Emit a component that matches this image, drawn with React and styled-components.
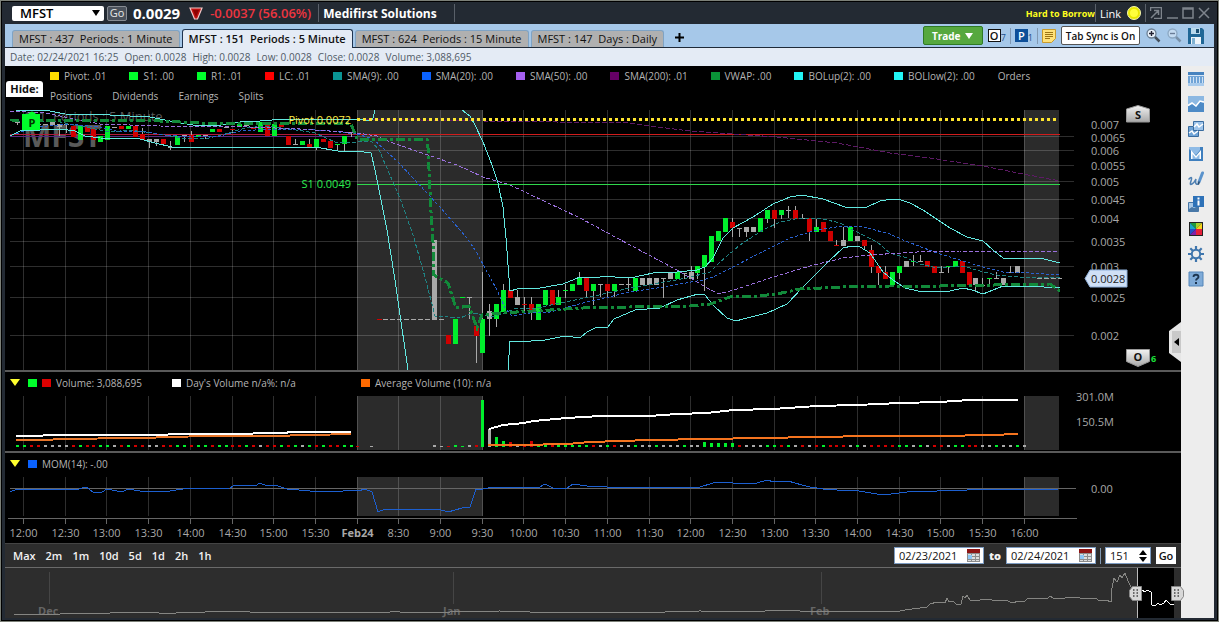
import React, { useState } from 'react'
import styled, { createGlobalStyle } from 'styled-components'

const COLORS = { g: '#00ee2c', r: '#d00000', w: '#a9a9a9' }
const STEP = 6.95

const legend = [
  ['Pivot: .01', '#ffde00'],
  ['S1: .00', '#00ff2b'],
  ['R1: .01', '#00ff2b'],
  ['LC: .01', '#ff0000'],
  ['SMA(9): .00', '#0a9494'],
  ['SMA(20): .00', '#0a62ff'],
  ['SMA(50): .00', '#a55ff0'],
  ['SMA(200): .01', '#660066'],
  ['VWAP: .00', '#0a9437'],
  ['BOLup(2): .00', '#22f5f5'],
  ['BOLlow(2): .00', '#22f5f5'],
  ['Orders', null],
]

const timeLabels = [
  '12:00', '12:30', '13:00', '13:30', '14:00', '14:30', '15:00', '15:30',
  'Feb24', '8:30', '9:00', '9:30', '10:00', '10:30', '11:00', '11:30',
  '12:00', '12:30', '13:00', '13:30', '14:00', '14:30', '15:00', '15:30',
  '16:00',
]
const gridX = timeLabels.map((_, i) => Math.round(23 + i * 41.7) + 0.5)

const priceLevels = [
  ['0.007', 124], ['0.0065', 137], ['0.006', 150], ['0.0055', 165],
  ['0.005', 181], ['0.0045', 199], ['0.004', 218], ['0.0035', 241],
  ['0.003', 266], ['0.0025', 297], ['0.002', 335],
]

// [color, body top, body bottom, wick top, wick bottom]
const dayOne = [
  ['w', 122, 123, 122, 125], ['w', 123, 124], ['w', 124, 125], ['w', 124, 125],
  ['w', 124, 125], ['w', 122, 125], ['w', 124, 127, 124, 136], ['w', 124, 125, 124, 133],
  ['r', 126, 137], ['g', 126, 140], ['r', 127, 132], ['r', 129, 140],
  ['g', 136, 142], ['g', 126, 140], ['w', 127, 128], ['r', 126, 129],
  ['g', 126, 129], ['r', 126, 137], ['r', 134, 140, 128, 140], ['w', 139, 142, 139, 148],
  ['w', 139, 142, 139, 146], ['r', 139, 144], ['w', 147, 148, 141, 150], ['g', 136, 145],
  ['w', 135, 136, 135, 142], ['r', 135, 142, 131, 142], ['g', 135, 137], ['w', 135, 136, 135, 139],
  ['g', 129, 132], ['r', 129, 132], ['w', 127, 128], ['r', 129, 130, 129, 133],
  ['g', 124, 127], ['w', 124, 126], ['r', 127, 129], ['g', 122, 132],
  ['r', 124, 136], ['g', 124, 136], ['r', 124, 127], ['r', 136, 145],
  ['w', 144, 145, 139, 145], ['g', 141, 145], ['r', 144, 147, 139, 147], ['g', 139, 147, 139, 150],
  ['r', 139, 142], ['r', 141, 148], ['g', 144, 145, 144, 150], ['g', 136, 144, 136, 152],
  ['w', 132, 133, 132, 137],
]

const preMarket = [
  ['r', 319, 320], ['w', 319, 320], ['w', 319, 320], ['w', 319, 320],
  ['w', 319, 320], ['w', 319, 320], ['w', 319, 320], ['w', 319, 320],
  ['w', 240, 320], ['w', 319, 320], ['r', 335, 344], ['g', 319, 344],
  ['g', 297, 298], ['w', 297, 298, 297, 319], ['r', 326, 336, 326, 363],
]

const dayTwo = [
  ['g', 319, 353, 272, 353], ['w', 311, 319, 304, 336], ['g', 304, 319, 304, 327],
  ['g', 290, 312, 284, 312], ['r', 290, 298], ['w', 297, 305, 290, 305],
  ['r', 304, 305, 297, 312], ['r', 304, 312, 297, 320], ['g', 304, 320],
  ['g', 290, 305], ['r', 290, 305], ['g', 297, 305, 290, 305],
  ['g', 290, 291, 284, 298], ['g', 284, 291], ['g', 278, 285, 272, 285],
  ['r', 278, 291, 278, 298], ['g', 284, 291, 284, 305], ['w', 284, 285, 284, 297],
  ['r', 284, 291, 284, 297], ['g', 284, 291, 284, 297], ['w', 284, 285],
  ['w', 284, 285, 278, 291], ['g', 278, 291], ['w', 278, 285],
  ['w', 278, 285], ['w', 278, 285], ['w', 278, 279, 278, 298],
  ['w', 272, 279], ['g', 272, 279], ['w', 273, 274, 273, 279],
  ['w', 272, 279, 266, 279], ['g', 266, 273, 266, 279], ['g', 255, 267, 255, 291],
  ['g', 236, 262], ['g', 231, 241], ['g', 218, 232],
  ['r', 222, 228, 218, 237], ['w', 228, 229, 228, 237], ['w', 227, 232, 227, 237],
  ['w', 227, 232], ['g', 218, 232], ['g', 210, 219, 210, 223],
  ['r', 210, 219, 210, 228], ['g', 210, 215, 210, 219], ['w', 210, 211, 206, 218],
  ['r', 210, 219, 206, 219], ['w', 218, 219, 214, 219], ['r', 218, 232, 218, 241],
  ['g', 227, 232, 219, 232], ['r', 222, 232], ['r', 231, 241],
  ['r', 245, 246, 240, 246], ['w', 240, 246, 227, 246], ['g', 227, 241],
  ['w', 236, 241], ['r', 240, 246, 240, 250], ['r', 250, 267, 245, 273],
  ['r', 266, 273, 266, 285], ['r', 272, 279, 266, 279], ['g', 272, 285],
  ['g', 266, 273, 266, 279], ['w', 261, 267], ['g', 261, 262, 255, 266],
  ['w', 261, 262, 255, 262], ['r', 261, 267], ['r', 266, 273],
  ['w', 272, 273, 266, 273], ['g', 266, 267, 266, 273], ['g', 261, 267],
  ['r', 261, 273], ['r', 272, 285], ['w', 278, 285, 278, 291],
  ['w', 285, 286, 278, 286], ['g', 278, 279, 278, 285], ['w', 278, 279, 272, 279],
  ['w', 278, 285], ['w', 272, 273, 266, 273], ['w', 266, 273],
]

const lines = {
  bolUpA: '16,110 45,110 65,114 110,115 150,117 175,122 193,125 215,126 240,122 260,121 285,119 300,120 330,119 357,119 371,121 373,118 375,110',
  bolUpB: '462,110 470,116 475,125 483,142 492,165 498,183 503,207 506,238 510,291 517,289 540,288 563,284 580,277 593,278 607,276 623,278 635,277 653,273 677,272 697,270 705,267 713,258 723,238 733,228 753,217 773,204 790,197 802,195 823,199 845,207 867,207 880,201 892,199 901,200 910,203 923,210 950,228 967,237 983,241 993,250 1003,258 1040,258 1060,263',
  bolLowA: '10,136 20,131 60,129 75,131 85,136 100,138 140,139 155,143 172,147 257,147 315,147 338,151 357,151 371,153 375,170 380,195 387,230 395,280 408,370',
  bolLowB: '508,370 510,341 518,342 545,340 565,336 580,338 587,332 595,328 608,327 614,319 635,310 660,308 677,300 698,294 705,295 713,305 727,318 736,321 743,319 767,313 787,304 803,287 830,260 843,248 852,246 860,247 870,253 883,272 893,280 905,288 918,291 950,291 963,288 972,290 983,294 1003,286 1027,286 1060,288',
  sma20: '16,134 35,127 70,124 100,127 120,132 140,131 165,135 190,137 220,136 240,131 270,129 300,129 330,131 357,134 373,139 399,163 440,207 453,222 467,238 477,253 485,268 497,290 505,308 512,316 530,313 550,312 583,303 630,292 657,288 703,280 713,277 733,267 760,253 790,238 817,230 843,226 863,227 890,234 903,240 937,253 960,260 983,267 1003,272 1030,273 1060,275',
  sma9: '16,121 60,122 90,128 110,132 130,130 165,135 180,138 205,139 225,134 245,128 265,126 290,129 315,133 335,142 357,142 371,141 379,150 400,198 413,235 425,277 435,316 460,318 473,313 493,317 517,308 537,308 560,303 590,297 630,288 687,278 710,272 720,262 740,245 763,230 780,222 800,218 823,219 840,223 857,232 877,242 890,253 907,258 920,264 937,268 963,266 983,272 997,275 1030,278 1060,277',
  sma50: '10,111 45,113 60,116 100,124 160,126 250,127 300,129 357,133 377,136 390,142 428,155 457,165 483,177 510,185 580,218 630,245 677,270 707,288 719,294 737,289 770,278 810,266 843,258 870,255 917,252 960,251 1057,251',
  sma200: '357,119 483,121 630,123 650,126 690,131 733,134 777,137 837,143 890,153 930,158 983,166 1023,174 1060,181',
  vwap: '10,120 160,121 200,123 300,123 351,124 357,139 427,139 428,148 431,212 433,242 434,275 448,283 456,308 469,306 477,328 482,315 500,313 583,308 630,307 690,306 710,304 730,297 757,296 777,294 800,289 843,287 890,286 940,286 1050,284 1060,291',
  dayVolA: '16,436 40,436 46,435 165,435 171,434 250,434 256,433 285,433 290,432 351,432',
  dayVolB: '489,429 496,427 503,425 524,423 533,421 567,418 600,416 649,416 677,414 707,413 733,410 773,409 817,406 857,405 900,403 940,402 970,400 1018,400',
  avgVolA: '16,440 50,440 56,439 140,438 205,436 270,436 351,434',
  avgVolB: '488,445 520,445 567,444 590,442 650,440 707,439 760,438 817,437 870,436 940,436 990,435 1018,434',
  mom: '10,492 17,489 40,489 68,489 75,490 86,487 93,492 102,492 107,489 122,492 128,489 140,491 163,492 183,489 230,488 235,485 255,486 260,483 267,486 275,485 287,489 310,491 337,492 350,490 358,491 365,489 372,492 378,512 385,509 438,509 448,512 462,508 470,507 476,489 483,489 493,487 523,487 540,487 545,484 553,488 567,488 573,484 587,486 607,487 700,487 713,483 727,482 733,483 757,483 767,480 774,482 788,481 802,485 810,487 823,489 837,490 853,490 883,495 907,492 967,490 1059,489',
  overview: '14,614 60,614 66,613 72,614 85,613 110,613 125,612 150,612 168,614 185,612 205,612 215,611 240,611 250,612 280,612 390,612 395,611 400,612 450,612 500,611 508,612 515,611 530,612 560,612 600,612 665,612 700,611 740,612 745,611 765,611 782,610 800,611 850,611 900,611 905,610 927,607 930,604 937,602 945,603 947,598 949,602 953,601 956,604 961,604 963,596 965,598 967,595 970,600 980,600 983,599 1000,601 1005,600 1013,603 1018,601 1024,602 1028,598 1035,599 1048,598 1050,596 1053,598 1065,598 1075,597 1085,599 1095,598 1100,601 1106,600 1111,602 1112,588 1114,578 1117,582 1120,575 1122,578 1125,573 1128,581 1131,587 1137,589',
  selected: '1142,590 1145,592 1147,590 1151,592 1152,605 1155,606 1158,603 1160,605 1164,603 1166,600 1170,604 1174,605',
}

const volumeA = 'ggrrwwwwrgrrggwrgrrwwrrggrggrggrrgrwrrgrgwgrgrrgg'
const volumeB = 'wwrggwr'
const volumeC =
  'gwggrwrrggrgggggrwgrwwgwwgwwwgwwgggggrwwwggrgwrwrgrrrwgwrrrrggwgwrrwggrrwwgwwgw'
const volumeHeights = { 0: 47, 1: 18, 2: 10, 3: 6, 4: 5, 7: 6, 32: 5, 33: 4, 34: 4, 35: 4, 36: 4 }

const GlobalStyle = createGlobalStyle`
  * {
    box-sizing: border-box;
  }
  body {
    margin: 0;
    background: #232a33;
    font-family: 'Open Sans', 'Noto Sans', sans-serif;
    font-size: 11px;
  }
  button, input, select {
    font: inherit;
    color: inherit;
    margin: 0;
    padding: 0;
    border: 0;
    background: none;
  }
  button {
    white-space: pre;
    cursor: pointer;
  }
`

const Candles = ({ data, start }) =>
  data.map(([c, top, bottom, high, low], i) => {
    const x = Math.round(start + i * STEP - 0.5)
    return (
      <g key={i} fill={COLORS[c]}>
        {high !== undefined && (
          <rect x={x} y={high} width="1" height={low - high} fill="#a9a9a9" />
        )}
        <rect x={x - 2} y={top} width="5" height={bottom - top} />
      </g>
    )
  })

const VolumeBars = ({ data, start, heights = {} }) =>
  data.split('').map((c, i) => {
    const h = heights[i] || 2
    return (
      <rect
        key={i}
        x={Math.round(start + i * STEP - 1.5)}
        y={447 - h}
        width="3"
        height={h}
        fill={COLORS[c]}
      />
    )
  })

const Grid = ({ top, bottom, shadeBottom = bottom }) => (
  <g>
    <rect x="357" y={top} width="126" height={shadeBottom - top} fill="#2b2b2b" />
    <rect x="1024" y={top} width="35" height={shadeBottom - top} fill="#2b2b2b" />
    {gridX.map((x) => (
      <path key={x} d={`M${x} ${top}V${bottom}`} stroke="#fff" strokeOpacity=".18" />
    ))}
  </g>
)

const PriceChart = () => (
  <Plot viewBox="5 105 1176 265" role="img" aria-label="Price chart">
    <g shapeRendering="crispEdges" fill="none">
      <Grid top={110} bottom={370} />
      {priceLevels.slice(1).map(([p, y]) => (
        <path
          key={p}
          d={`M10 ${p === '0.0065' ? 136.5 : y + 0.5}H1074`}
          stroke="#fff"
          strokeOpacity=".18"
        />
      ))}
    </g>
    <Mark x="23" y="147" size={30}>MFST</Mark>
    <Mark x="24" y="121" size={13}>151  Periods : 5 Minute</Mark>
    <g shapeRendering="crispEdges" fill="none">
      <path d="M10 134.5H357" stroke="#b01a3a" />
      <path d="M10 136.5H357" stroke="#582a80" />
      <path d="M357 134.5H1060" stroke="#d01c1c" />
      <path d="M357 184.5H1060" stroke="#2fd84c" />
      <Candles data={dayOne} start={17.5} />
      <Candles data={preMarket} start={379} />
      <Candles data={dayTwo} start={482.5} />
      <path d="M1037 278.5H1062" stroke="#a9a9a9" strokeDasharray="5 2" />
      <polyline points={lines.sma200} stroke="#5e1a66" strokeDasharray="5 2" />
      <polyline points={lines.sma9} stroke="#1f8383" strokeDasharray="4 2" />
      <polyline points={lines.sma20} stroke="#2a62d0" strokeDasharray="3 2" />
      <polyline points={lines.sma50} stroke="#9a70dd" strokeDasharray="4 2" />
      <polyline points={lines.bolUpA} stroke="#62e8e0" />
      <polyline points={lines.bolUpB} stroke="#62e8e0" />
      <polyline points={lines.bolLowA} stroke="#62e8e0" />
      <polyline points={lines.bolLowB} stroke="#62e8e0" />
      <polyline
        points={lines.vwap}
        stroke="#128a3a"
        strokeWidth="3"
        strokeDasharray="9 3 3 3"
      />
      <path d="M357 119.5H1058" stroke="#ffe62e" strokeWidth="3" strokeDasharray="3 3" />
    </g>
    <path d="M22 114h6q4-5 8 0h4v16h-18z" fill="#00ff2b" />
    <Tick x="32" y="127" anchor="middle" fill="#003300" bold>P</Tick>
    <Tick x="351" y="124" anchor="end" fill="#ffe940">Pivot 0.0072</Tick>
    <Tick x="351" y="188" anchor="end" fill="#2bf050">S1 0.0049</Tick>
    {priceLevels.map(([p, y]) => (
      <Tick key={p} x="1091" y={y + 5}>{p}</Tick>
    ))}
    <path
      d="M1085 278.5l5-8.5h37v17h-37z"
      fill="#cfe0f6"
      stroke="#8fb0da"
    />
    <Tick x="1091" y="283" fill="#222">0.0028</Tick>
    <path d="M1126.500 109l11.500-3.500 11.500 3.500v13h-23z" fill="url(#metal)" stroke="#999" />
    <path d="M1126.500 349.500h23v12l-11.500 5-11.500-5z" fill="url(#metal)" stroke="#999" />
    <Tick x="1138" y="119" anchor="middle" fill="#111" bold>S</Tick>
    <Tick x="1138" y="361" anchor="middle" fill="#111" bold>O</Tick>
    <Tick x="1151" y="362" fill="#1be23a" bold small>6</Tick>
    <defs>
      <linearGradient id="metal" x1="0" y1="0" x2="0" y2="1">
        <stop offset="0" stopColor="#f2f2f2" />
        <stop offset="1" stopColor="#a8a8a8" />
      </linearGradient>
    </defs>
  </Plot>
)

const VolumeChart = () => (
  <Plot viewBox="5 396 1176 55" role="img" aria-label="Volume chart">
    <g shapeRendering="crispEdges" fill="none">
      <Grid top={396} bottom={450} />
      <VolumeBars data={volumeA} start={17.5} />
      <VolumeBars data="r" start={357.5} heights={{ 0: 1 }} />
      <VolumeBars data="w" start={371.5} heights={{ 0: 1 }} />
      <VolumeBars data={volumeB} start={434.5} heights={{ 1: 1, 2: 1, 4: 1 }} />
      <VolumeBars data={volumeC} start={482.5} heights={volumeHeights} />
      <g strokeWidth="2">
        <polyline points={lines.avgVolA} stroke="#e8762a" />
        <polyline points={lines.avgVolB} stroke="#f5741f" />
        <polyline points={lines.dayVolA} stroke="#fff" />
        <polyline points={lines.dayVolB} stroke="#fff" />
      </g>
    </g>
    <Tick x="1076" y="401">301.0M</Tick>
    <Tick x="1076" y="426">150.5M</Tick>
  </Plot>
)

const MomentumChart = () => (
  <Plot viewBox="5 477 1176 66" role="img" aria-label="Momentum chart">
    <g shapeRendering="crispEdges" fill="none">
      <Grid top={477} bottom={516} />
      <path d="M10 488.500H1076M8 518.500H1077" stroke="#666" />
      {gridX.map((x) => (
        <path key={x} d={`M${x} 519V524`} stroke="#666" />
      ))}
      <polyline points={lines.mom} stroke="#1c5fd0" />
    </g>
    <Tick x="1091" y="493">0.00</Tick>
    {timeLabels.map((t, i) => (
      <Tick key={i} x={gridX[i]} y="537" anchor="middle" bold={t === 'Feb24'}>
        {t}
      </Tick>
    ))}
  </Plot>
)

const Grip = ({ x, flip }) => (
  <g transform={`translate(${x} 586)`}>
    <path
      d={flip ? 'M.500 .500h9l3 4v6l-3 4h-9z' : 'M12.500 .500h-9l-3 4v6l3 4h9z'}
      fill="#d8d8d8"
      stroke="#888"
    />
    {[4, 7, 10].map((y) => (
      <path key={y} d={`M${flip ? 3 : 4} ${y}h1.500m2 0h1.500`} stroke="#444" strokeWidth="1.500" />
    ))}
  </g>
)

const Overview = () => (
  <Plot viewBox="5 567 1176 51" role="img" aria-label="Range selector">
    <g shapeRendering="crispEdges" fill="none">
      <rect x="5" y="567" width="1176" height="51" fill="#2d2d2d" />
      <path d="M5 567.500H1181" stroke="#6a6a6a" />
      <path d="M49.500 572V604M453.500 572V604M821.500 572V604" stroke="#454545" />
      <rect x="1137" y="568" width="37" height="50" fill="#000" />
      <path d="M1137.500 568V618" stroke="#bbb" />
    </g>
    <Tick x="38" y="615" fill="#666" bold>Dec</Tick>
    <Tick x="443" y="615" fill="#666" bold>Jan</Tick>
    <Tick x="810" y="615" fill="#666" bold>Feb</Tick>
    <g shapeRendering="crispEdges" fill="none">
      <polyline points={lines.overview} stroke="#858582" />
      <polyline points={lines.selected} stroke="#fff" />
    </g>
    <Grip x={1129} />
    <Grip x={1171} flip />
  </Plot>
)

const CalendarIcon = () => (
  <svg width="13" height="13" viewBox="0 0 13 13" aria-hidden="true">
    <path d="M0 0h13v13H0z" fill="#8c8c8c" />
    <path d="M0 0h13v4H0z" fill="#8e1414" />
    <path
      d="M1 5h3v2H1zM5 5h3v2H5zM9 5h3v2H9zM5 8h3v2H5zM9 8h3v2H9zM1 11h3v1H1zM5 11h3v1H5zM9 11h3v1H9z"
      fill="#ddd"
    />
    <path d="M1 6h4v4H1z" fill="#8cc6f5" />
  </svg>
)

const Magnifier = ({ sign, faded }) => (
  <svg width="15" height="15" viewBox="0 0 15 15" fill="none" opacity={faded ? 0.45 : 1} aria-hidden="true">
    <path d="M8.500 8.500l5 5" stroke="#44505c" strokeWidth="2.500" />
    <circle cx="5.500" cy="5.500" r="4.500" fill="#eaf3fc" stroke="#6c8196" strokeWidth="1.300" />
    <path d={sign === '+' ? 'M3 5.500h5M5.500 3v5' : 'M3 5.500h5'} stroke="#223" strokeWidth="1.400" />
  </svg>
)

const sideIcons = [
  ['Table', <g key="i"><path d="M0 1h16v14H0z" fill="#6fa3d6" /><path d="M0 1h16v3H0z" fill="#4783bf" /><path d="M0 4h16v1H0z" fill="#d8e8f7" /><path d="M0 12h16v3H0z" fill="#a9cbec" /><path d="M2.500 6v6M5.500 6v6M8.500 6v6M11.500 6v6M14.500 6v6" stroke="#cfe2f5" /></g>],
  ['Chart', <g key="i"><path d="M0 0h16v16H0z" fill="#4d8ac6" /><path d="M0 0h16v7l-4-1-4 5-4-3-4 2z" fill="#8cb8e2" /><path d="M0 9.500l4-2.500 4 3 4-5 4 1" stroke="#fff" strokeWidth="1.500" fill="none" /></g>],
  ['Compare charts', <g key="i"><path d="M.500 5.500h10v10h-10z" fill="#6fa3d6" stroke="#3a6c9f" /><path d="M5.500 .500h10v9h-10z" fill="#9cc3ea" stroke="#3a6c9f" /><path d="M1 12l3-2 2 3 4-3M6 6l3-3 2 3 4-3" stroke="#fff" strokeWidth="1.500" fill="none" /></g>],
  ['Overlay', <g key="i"><path d="M1 1h14v14H1z" fill="#3f7fbe" /><path d="M1 1h11v3L8 9 1 3z" fill="#8fbbe6" /><path d="M3 13V4l5 6 5-6v9z" fill="#fff" /><path d="M4.500 13V8L8 12l3.500-4v5z" fill="#8fbbe6" /></g>],
  ['Draw', <g key="i" fill="none" strokeLinecap="round"><path d="M1 8c3-3 3-1 2 2s-1 4 1 3 3-3 4-5c-1 4 0 6 2 5" stroke="#4d7fb2" strokeWidth="1.500" /><path d="M11 11l3.500-9" stroke="#5b93cc" strokeWidth="3" /><path d="M10.500 13l.500-2" stroke="#2c4e70" strokeWidth="1.500" /></g>],
  ['Chart info', <g key="i"><path d="M.500 6.500h10v9h-10z" fill="#a9c8e6" stroke="#4878a8" /><path d="M1 13l3-2 2 1 4-2v5H1z" fill="#4878a8" /><path d="M5 0h11v11H5z" fill="#2e72b8" /><path d="M9.500 4.500h2v5h-2zM9.500 1.500h2v2h-2z" fill="#fff" /></g>],
  ['Colors', <g key="i"><path d="M1 1h14v14H1z" fill="#222" /><path d="M2 2h6v6z" fill="#1e9a3c" /><path d="M2 2v6h6z" fill="#1aa7c8" /><path d="M8 2h6L8 8z" fill="#a6d02c" /><path d="M14 2v6H8z" fill="#f7d31b" /><path d="M2 8h6l-6 6z" fill="#2452c8" /><path d="M8 8v6H2z" fill="#8220a8" /><path d="M8 8h6v6H8z" fill="#e6203a" /></g>],
  ['Settings', <g key="i" fill="none" stroke="#3f76ad"><circle cx="8" cy="8" r="4.200" strokeWidth="2" /><path d="M8 0v3.500M8 12.500V16M0 8h3.500M12.500 8H16M2.300 2.300l2.500 2.500M11.200 11.200l2.500 2.500M2.300 13.700l2.500-2.500M11.200 4.800l2.500-2.500" strokeWidth="2.200" /></g>],
  ['Help', <g key="i"><path d="M1 1h14v14H1z" fill="#7fabd8" stroke="#5585b8" /><path d="M5.500 6c0-3 5-3 5 0 0 1.500-2.500 1.500-2.500 3.500" stroke="#1d3550" strokeWidth="1.800" fill="none" /><path d="M7 11h2v2H7z" fill="#1d3550" /></g>],
]

const App = () => {
  const [symbol, setSymbol] = useState('MFST')
  const [from, setFrom] = useState('02/23/2021')
  const [to, setTo] = useState('02/24/2021')
  const [count, setCount] = useState(151)

  return (
    <Window>
      <GlobalStyle />
      <TitleBar>
        <SymbolBox>
          <select aria-label="Symbol" value={symbol} onChange={(e) => setSymbol(e.target.value)}>
            <option>MFST</option>
          </select>
          <svg width="8" height="6" viewBox="0 0 8 6" aria-hidden="true">
            <path d="M0 0h8L4 6z" />
          </svg>
        </SymbolBox>
        <GoButton>Go</GoButton>
        <Price>0.0029</Price>
        <svg width="14" height="13" viewBox="0 0 14 13" role="img" aria-label="Down">
          <path d="M1 1h12L8.500 12h-3z" fill="#c01010" stroke="#f0c8c8" strokeWidth="1.200" />
          <path d="M4 3h6L7 10z" fill="#8c0000" />
        </svg>
        <Change>-0.0037 (56.06%)</Change>
        <Rule />
        <Company>Medifirst Solutions</Company>
        <Rule $push />
        <Borrow>Hard to Borrow</Borrow>
        <Rule />
        <LinkLabel>Link</LinkLabel>
        <svg width="14" height="14" viewBox="0 0 14 14" aria-hidden="true">
          <circle cx="7" cy="7" r="6.500" fill="#e8e800" stroke="#f7f7b0" />
          <circle cx="7" cy="7" r="4" fill="#ffff3c" />
        </svg>
        <Rule />
        <WindowButtons>
          <button aria-label="Pop out">
            <svg viewBox="0 0 12 12"><path d="M.500 4V.500h11v11H4M1 11l7-7M4 3.500h4.500V8" /></svg>
          </button>
          <button aria-label="Minimize">
            <svg viewBox="0 0 12 12"><path d="M1 11h11" /></svg>
          </button>
          <button aria-label="Maximize">
            <svg viewBox="0 0 12 12"><path d="M1 1h10v10H1zM1 2h10" /></svg>
          </button>
          <button aria-label="Close">
            <svg viewBox="0 0 12 12"><path d="M1 1l10 10M11 1L1 11" /></svg>
          </button>
        </WindowButtons>
      </TitleBar>

      <TabBar>
        <Tab>{'MFST : 437  Periods : 1 Minute'}</Tab>
        <Tab $active>{'MFST : 151  Periods : 5 Minute'}</Tab>
        <Tab>{'MFST : 624  Periods : 15 Minute'}</Tab>
        <Tab>{'MFST : 147  Days : Daily'}</Tab>
        <AddTab aria-label="Add tab">
          <svg width="9" height="9" viewBox="0 0 9 9"><path d="M4.500 0v9M0 4.500h9" stroke="#000" strokeWidth="2" /></svg>
        </AddTab>
        <Tools>
          <TradeButton>
            Trade
            <svg width="8" height="6" viewBox="0 0 8 6" aria-hidden="true"><path d="M0 0h8L4 6z" fill="#fff" /></svg>
          </TradeButton>
          <CountButton><b>O</b><sub>7</sub></CountButton>
          <ToolRule />
          <CountButton $solid><b>P</b><sub>1</sub></CountButton>
          <ToolRule />
          <button aria-label="Notes">
            <svg width="14" height="14" viewBox="0 0 14 14">
              <path d="M.500 .500h13v9l-4 4h-9z" fill="#ffe27a" stroke="#c89b2c" />
              <path d="M3 3.500h8M3 5.500h8M3 7.500h8M3 9.500h5" stroke="#9c7415" />
            </svg>
          </button>
          <SyncButton>Tab Sync is On</SyncButton>
          <ToolGroup>
            <button aria-label="Zoom in"><Magnifier sign="+" /></button>
            <button aria-label="Zoom out"><Magnifier sign="-" faded /></button>
            <button aria-label="Save">
              <svg width="16" height="16" viewBox="0 0 16 16">
                <path d="M0 0h14l2 2v14H0z" fill="#1f6796" />
                <path d="M3 0h9v6H3z" fill="#b9d9ec" />
                <path d="M8 1h3v4H8z" fill="#1b4f72" />
                <path d="M3 9h10v7H3z" fill="#eef5fa" />
                <path d="M4 10h3v6H4z" fill="#7fb2d2" />
              </svg>
            </button>
          </ToolGroup>
        </Tools>
      </TabBar>

      <InfoBar>
        <span>Date: 02/24/2021 16:25</span>
        <span>Open: 0.0028</span>
        <span>High: 0.0028</span>
        <span>Low: 0.0028</span>
        <span>Close: 0.0028</span>
        <span>Volume: 3,088,695</span>
      </InfoBar>

      <Body>
        <Charts>
          <Legend>
            <HideButton>Hide:</HideButton>
            <div>
              <LegendRow $gap={23}>
                {legend.map(([label, color]) => (
                  <LegendItem key={label}>
                    {color && <Swatch $color={color} />}
                    {label}
                  </LegendItem>
                ))}
              </LegendRow>
              <LegendRow $gap={20}>
                <LegendItem>Positions</LegendItem>
                <LegendItem>Dividends</LegendItem>
                <LegendItem>Earnings</LegendItem>
                <LegendItem>Splits</LegendItem>
              </LegendRow>
            </div>
          </Legend>
          <PriceChart />
          <Collapse aria-label="Collapse panel">
            <svg width="12" height="40" viewBox="0 0 12 40">
              <path d="M12 0L0 9v22l12 9z" fill="#e6e6e6" />
              <path d="M3 9h9v22H3z" fill="#c9c9c9" />
              <path d="M10 16v8l-5-4z" fill="#000" />
            </svg>
          </Collapse>

          <SubLegend>
            <Fold aria-label="Fold volume"><svg width="10" height="7" viewBox="0 0 10 7"><path d="M0 0h10L5 7z" fill="#ffff2e" /></svg></Fold>
            <Swatch $color="#00ff2b" />
            <SubItem $width={130}><Swatch $color="#dd0000" />Volume: 3,088,695</SubItem>
            <SubItem $width={189}><Swatch $color="#fff" />Day's Volume n/a%: n/a</SubItem>
            <SubItem><Swatch $color="#ff6a00" />Average Volume (10): n/a</SubItem>
          </SubLegend>
          <VolumeChart />

          <SubLegend>
            <Fold aria-label="Fold momentum"><svg width="10" height="7" viewBox="0 0 10 7"><path d="M0 0h10L5 7z" fill="#ffff2e" /></svg></Fold>
            <SubItem><Swatch $color="#0a62ff" />MOM(14): -.00</SubItem>
          </SubLegend>
          <MomentumChart />

          <RangeBar>
            {['Max', '2m', '1m', '10d', '5d', '1d', '2h', '1h'].map((r) => (
              <button key={r}>{r}</button>
            ))}
            <RangeForm>
              <Field $width={90}>
                <input aria-label="From date" value={from} onChange={(e) => setFrom(e.target.value)} />
                <button aria-label="Pick from date"><CalendarIcon /></button>
              </Field>
              <b>to</b>
              <Field $width={90}>
                <input aria-label="To date" value={to} onChange={(e) => setTo(e.target.value)} />
                <button aria-label="Pick to date"><CalendarIcon /></button>
              </Field>
              <ToolRule />
              <Field $width={46}>
                <input aria-label="Periods" value={count} onChange={(e) => setCount(e.target.value)} />
                <Spinner>
                  <button aria-label="More" onClick={() => setCount(+count + 1)}><svg width="8" height="5" viewBox="0 0 8 5"><path d="M0 5h8L4 0z" /></svg></button>
                  <button aria-label="Fewer" onClick={() => setCount(+count - 1)}><svg width="8" height="5" viewBox="0 0 8 5"><path d="M0 0h8L4 5z" /></svg></button>
                </Spinner>
              </Field>
              <RangeGo>Go</RangeGo>
            </RangeForm>
          </RangeBar>
          <Overview />
        </Charts>

        <Sidebar>
          {sideIcons.map(([label, icon]) => (
            <button key={label} aria-label={label}>
              <svg width="16" height="16" viewBox="0 0 16 16">{icon}</svg>
            </button>
          ))}
        </Sidebar>
      </Body>
    </Window>
  )
}

const Window = styled.div`
  min-height: 100vh;
  padding: 1px 4px 3px;
  border: 1px solid #7c8078;
  background: #232a33;
  box-shadow: inset 0 0 0 1px #000;
`

const TitleBar = styled.header`
  display: flex;
  align-items: center;
  height: 22px;
  padding: 0 4px 0 7px;
  color: #fff;
`

const SymbolBox = styled.div`
  display: flex;
  align-items: center;
  width: 92px;
  height: 15px;
  margin-right: 3px;
  padding-right: 4px;
  background: #fff;
  border-radius: 2px;
  color: #000;

  select {
    flex: 1;
    appearance: none;
    height: 15px;
    padding-left: 8px;
    font-size: 13px;
    font-weight: 600;
    line-height: 15px;
    outline: none;
  }
`

const GoButton = styled.button`
  width: 20px;
  height: 15px;
  margin-right: 6px;
  border: 1px solid #878c93;
  border-radius: 2px;
  background: #4a515b;
  color: #e8e8e8;
  line-height: 12px;
`

const Price = styled.strong`
  margin-right: 9px;
  font-size: 15px;
`

const Change = styled.span`
  margin: 0 7px;
  color: #ee3540;
  font-size: 13px;
  font-weight: 600;
`

const Rule = styled.i`
  width: 1px;
  height: 18px;
  margin-right: ${(p) => (p.$push ? 'auto' : '4px')};
  background: #596069;
`

const Company = styled.strong`
  margin-right: 17px;
  font-size: 12px;
`

const Borrow = styled.span`
  color: #ffff1e;
  font-size: 9px;
  font-weight: 700;
`

const LinkLabel = styled.span`
  margin-right: 6px;

  & + svg {
    margin-right: 4px;
  }
`

const WindowButtons = styled.div`
  display: flex;
  gap: 4px;

  button {
    height: 12px;
  }

  svg {
    display: block;
    width: 12px;
    height: 12px;
    fill: none;
    stroke: #7e848c;
    stroke-width: 1.5;
  }
`

const TabBar = styled.nav`
  display: flex;
  align-items: flex-end;
  gap: 2px;
  height: 24px;
  padding: 0 10px 0 7px;
  border-bottom: 1px solid #1f2a38;
  background: #a6c8e9;
`

const Tab = styled.button`
  height: ${(p) => (p.$active ? '19px' : '17px')};
  margin-bottom: ${(p) => (p.$active ? '-1px' : '0')};
  padding: 0 6px;
  border: 1px solid ${(p) => (p.$active ? '#1f3450' : '#7fa3c4')};
  border-bottom: 0;
  border-radius: 3px 3px 0 0;
  background: ${(p) => (p.$active ? '#e4ebf5' : '#b0b0b0')};
  color: #111;
  font-weight: ${(p) => (p.$active ? 600 : 400)};
  line-height: 16px;
`

const AddTab = styled.button`
  align-self: center;
  margin-left: 9px;
  padding-top: 4px;
`

const Tools = styled.div`
  display: flex;
  align-items: center;
  align-self: stretch;
  gap: 5px;
  margin-left: auto;

  svg {
    display: block;
  }
`

const ToolGroup = styled.div`
  display: flex;
  align-items: center;
  gap: 6px;
  margin-left: 1px;
`

const TradeButton = styled.button`
  display: flex;
  align-items: center;
  justify-content: center;
  gap: 5px;
  width: 60px;
  height: 19px;
  border: 1px solid #2f7a24;
  border-radius: 2px;
  background: #56a83e;
  color: #fff;
  font-size: 10px;
  font-weight: 700;
`

const CountButton = styled.button`
  display: flex;
  align-items: flex-end;

  b {
    width: 13px;
    height: 13px;
    border: 1px solid ${(p) => (p.$solid ? '#0d4f99' : '#111')};
    background: ${(p) => (p.$solid ? '#0d4f99' : '#fff')};
    color: ${(p) => (p.$solid ? '#fff' : '#111')};
    font-weight: 600;
    line-height: 11px;
  }

  sub {
    color: #1c4f8c;
    font-size: 9px;
    line-height: 8px;
    vertical-align: baseline;
  }
`

const ToolRule = styled.i`
  width: 1px;
  height: 16px;
  margin: 0 -1px;
  background: #8199b3;
`

const SyncButton = styled.button`
  width: 79px;
  height: 19px;
  border: 1px solid #555;
  border-radius: 2px;
  background: #fff;
  color: #111;
  font-size: 10px;
  font-weight: 600;
`

const InfoBar = styled.div`
  display: flex;
  align-items: center;
  gap: 6px;
  height: 18px;
  padding: 0 5px;
  background: #e4ebf5;
  color: #505a66;
  font-size: 10px;
`

const Body = styled.main`
  display: flex;
`

const Charts = styled.section`
  position: relative;
  flex: 1;
  min-width: 0;
  background: #000;
`

const Plot = styled.svg`
  display: block;
  width: 100%;
  height: auto;
  overflow: visible;
`

const Tick = styled.text.attrs((p) => ({ fill: p.fill || '#a8a8a8' }))`
  font-size: ${(p) => (p.small ? '9px' : '11px')};
  font-weight: ${(p) => (p.bold ? 700 : 400)};
  text-anchor: ${(p) => p.anchor || 'start'};
`

const Mark = styled.text`
  fill: #5a5a5a;
  font-size: ${(p) => p.size}px;
  font-weight: ${(p) => (p.size > 20 ? 700 : 400)};
  white-space: pre;
`

const Legend = styled.div`
  display: flex;
  gap: 7px;
  height: 39px;
  padding-left: 1px;
`

const HideButton = styled.button`
  width: 37px;
  height: 16px;
  margin-top: 15px;
  border-radius: 3px 3px 0 0;
  background: #fff;
  color: #111;
  font-weight: 700;
  line-height: 16px;
`

const LegendRow = styled.div`
  display: flex;
  align-items: center;
  gap: ${(p) => p.$gap}px;
  height: 20px;
`

const LegendItem = styled.button`
  display: flex;
  align-items: center;
  gap: 5px;
  color: #b4b4b4;
  font-size: 10px;
`

const Swatch = styled.i`
  flex: none;
  width: 9px;
  height: 8px;
  background: ${(p) => p.$color};
`

const SubLegend = styled.div`
  display: flex;
  align-items: center;
  gap: 5px;
  height: 26px;
  padding: 0 5px 3px;
  border-top: 2px solid #5a5a5a;
`

const SubItem = styled.span`
  display: flex;
  align-items: center;
  gap: 5px;
  width: ${(p) => (p.$width ? `${p.$width}px` : 'auto')};
  margin-right: -5px;
  color: #b4b4b4;
  font-size: 10px;
`

const Fold = styled.button`
  width: 13px;

  svg {
    display: block;
  }
`

const Collapse = styled.button`
  position: absolute;
  top: 256px;
  right: 0;

  svg {
    display: block;
  }
`

const RangeBar = styled.div`
  display: flex;
  align-items: center;
  gap: 10px;
  height: 24px;
  padding: 0 5px 0 8px;
  border-top: 1px solid #444;
  background: #2d2d2d;
  color: #f2f2f2;
  font-weight: 600;
`

const RangeForm = styled.div`
  display: flex;
  align-items: center;
  gap: 5px;
  margin-left: auto;
`

const Field = styled.div`
  display: flex;
  align-items: center;
  justify-content: space-between;
  width: ${(p) => p.$width}px;
  height: 17px;
  padding: 0 3px 0 4px;
  border: 1px solid #7d9cc2;
  background: #fff;
  color: #111;
  font-weight: 400;

  input {
    flex: 1;
    min-width: 0;
    outline: none;
  }

  svg {
    display: block;
  }
`

const Spinner = styled.div`
  display: grid;
  gap: 2px;
`

const RangeGo = styled.button`
  width: 20px;
  height: 17px;
  background: #fff;
  color: #111;
  font-weight: 600;
`

const Sidebar = styled.aside`
  display: flex;
  flex-direction: column;
  align-items: center;
  gap: 9px;
  width: 33px;
  padding: 5px 3px 0 0;
  background: #ededed;

  svg {
    display: block;
  }
`

export default App
